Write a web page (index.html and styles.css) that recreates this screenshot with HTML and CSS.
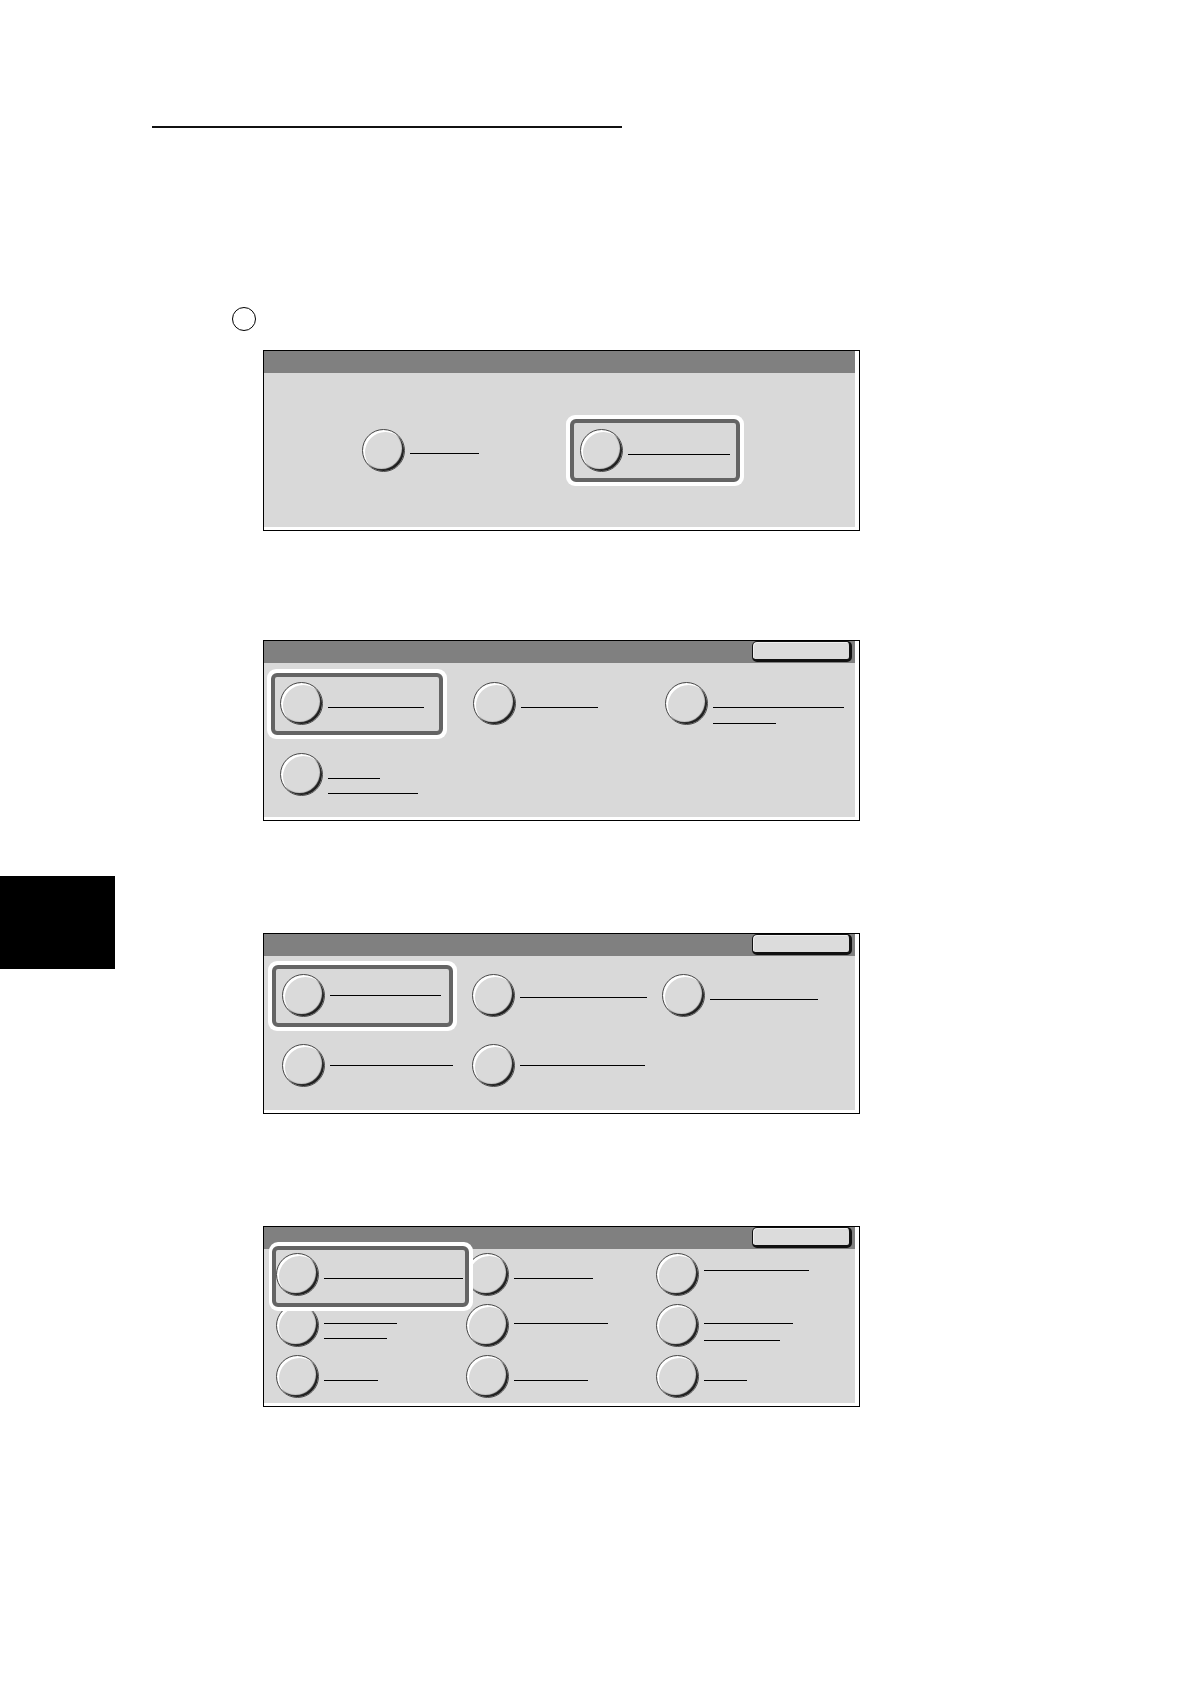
FILE: index.html
```html
<!DOCTYPE html>
<html lang="en">
<head>
<meta charset="utf-8">
<title>Screens</title>
<link rel="stylesheet" href="styles.css">
</head>
<body>
<div class="page">
  <div class="rule"></div>
  <div class="marker"></div>

  <div class="panel p1">
    <div class="title"></div>
    <div class="body">
      <div class="opt o1">
        <div class="circ"></div>
        <div class="lbl t24"><div class="ln w69"></div></div>
      </div>
      <div class="sel s1">
        <div class="sel-in">
          <div class="opt">
            <div class="circ"></div>
            <div class="lbl t25"><div class="ln w102"></div></div>
          </div>
        </div>
      </div>
    </div>
  </div>

  <div class="panel p2">
    <div class="title"><div class="tbtn"></div></div>
    <div class="body grid">
      <div class="sel s2">
        <div class="sel-in">
          <div class="opt">
            <div class="circ"></div>
            <div class="lbl t25"><div class="ln w96"></div></div>
          </div>
        </div>
      </div>
      <div class="opt">
        <div class="circ"></div>
        <div class="lbl t25"><div class="ln w77"></div></div>
      </div>
      <div class="opt">
        <div class="circ"></div>
        <div class="lbl t25"><div class="ln w131"></div><div class="ln w63 g15"></div></div>
      </div>
      <div class="opt">
        <div class="circ"></div>
        <div class="lbl t25"><div class="ln w52"></div><div class="ln w90 g14"></div></div>
      </div>
    </div>
  </div>

  <div class="panel p3">
    <div class="title"><div class="tbtn"></div></div>
    <div class="body grid">
      <div class="sel s3">
        <div class="sel-in">
          <div class="opt">
            <div class="circ"></div>
            <div class="lbl t21"><div class="ln w111"></div></div>
          </div>
        </div>
      </div>
      <div class="opt">
        <div class="circ"></div>
        <div class="lbl t23"><div class="ln w127"></div></div>
      </div>
      <div class="opt">
        <div class="circ"></div>
        <div class="lbl t25"><div class="ln w108"></div></div>
      </div>
      <div class="opt">
        <div class="circ"></div>
        <div class="lbl t21"><div class="ln w123"></div></div>
      </div>
      <div class="opt">
        <div class="circ"></div>
        <div class="lbl t21"><div class="ln w125"></div></div>
      </div>
    </div>
  </div>

  <div class="panel p4">
    <div class="title"><div class="tbtn"></div></div>
    <div class="body grid">
      <div class="sel s4">
        <div class="sel-in">
          <div class="opt">
            <div class="circ"></div>
            <div class="lbl t25"><div class="ln w139"></div></div>
          </div>
        </div>
      </div>
      <div class="opt">
        <div class="circ"></div>
        <div class="lbl t25"><div class="ln w79"></div></div>
      </div>
      <div class="opt">
        <div class="circ"></div>
        <div class="lbl t17"><div class="ln w105"></div></div>
      </div>
      <div class="opt">
        <div class="circ"></div>
        <div class="lbl t19"><div class="ln w73"></div><div class="ln w63 g14"></div></div>
      </div>
      <div class="opt">
        <div class="circ"></div>
        <div class="lbl t19"><div class="ln w94"></div></div>
      </div>
      <div class="opt">
        <div class="circ"></div>
        <div class="lbl t19"><div class="ln w89"></div><div class="ln w76 g16"></div></div>
      </div>
      <div class="opt">
        <div class="circ"></div>
        <div class="lbl t25"><div class="ln w54"></div></div>
      </div>
      <div class="opt">
        <div class="circ"></div>
        <div class="lbl t25"><div class="ln w74"></div></div>
      </div>
      <div class="opt">
        <div class="circ"></div>
        <div class="lbl t25"><div class="ln w43"></div></div>
      </div>
    </div>
  </div>
</div>
<div class="tab"></div>
</body>
</html>
```

FILE: styles.css
```css
* { box-sizing: border-box; }
html, body { margin: 0; padding: 0; background: #fff; }
body {
  font-family: "Liberation Sans", Arial, sans-serif;
  position: relative;
  min-height: 1684px;
}
.page { padding-top: 126px; }

.rule {
  margin-left: 152px;
  width: 470px;
  height: 2px;
  background: #111;
}
.marker {
  margin: 179px 0 0 232px;
  width: 24px;
  height: 24px;
  border: 1px solid #000;
  border-radius: 50%;
}

.panel {
  width: 597px;
  height: 181px;
  margin-left: 263px;
  border: 1px solid #000;
  background: #fff;
  padding: 0 4px 3px 0;
  display: flex;
  flex-direction: column;
}
.p1 { margin-top: 19px; }
.p2 { margin-top: 109px; }
.p3 { margin-top: 112px; }
.p4 { margin-top: 112px; }

.title {
  height: 22px;
  flex: none;
  background: #808080;
  display: flex;
  justify-content: flex-end;
  align-items: flex-start;
  padding: 0 3px 0 0;
}
.tbtn {
  width: 100px;
  height: 21px;
  background: #dcdcdc;
  border: 1px solid #111;
  border-right-width: 3px;
  border-bottom-width: 3px;
  border-radius: 5px;
  box-shadow: inset 1px 1px 0 #efefef;
}

.body {
  flex: 1;
  background: #d9d9d9;
}

.opt {
  display: flex;
  align-items: flex-start;
}
.circ {
  flex: none;
  width: 43px;
  height: 43px;
  border-radius: 50%;
  background: #dadada;
  border: 1px solid #4a4a4a;
  box-shadow: inset 2px 2px 0 #fff, inset -2px -2px 1px #1e1e1e;
}
.lbl {
  margin-left: 5px;
  display: flex;
  flex-direction: column;
}
.ln { height: 0; border-top: 1px solid #000; }

.t17 { padding-top: 17px; }
.t19 { padding-top: 19px; }
.t21 { padding-top: 21px; }
.t23 { padding-top: 23px; }
.t24 { padding-top: 24px; }
.t25 { padding-top: 25px; }
.g14 { margin-top: 14px; }
.g15 { margin-top: 15px; }
.g16 { margin-top: 16px; }

.w43 { width: 43px; } .w52 { width: 52px; } .w54 { width: 54px; }
.w63 { width: 63px; } .w69 { width: 69px; } .w73 { width: 73px; }
.w74 { width: 74px; } .w76 { width: 76px; } .w77 { width: 77px; }
.w79 { width: 79px; } .w89 { width: 89px; } .w90 { width: 90px; }
.w94 { width: 94px; } .w96 { width: 96px; } .w102 { width: 102px; }
.w105 { width: 105px; } .w108 { width: 108px; } .w111 { width: 111px; }
.w123 { width: 123px; } .w125 { width: 125px; } .w127 { width: 127px; }
.w131 { width: 131px; } .w139 { width: 139px; }

/* selected option highlight */
.sel {
  position: relative;
  z-index: 1;
  background: #fff;
  border-radius: 9px;
  padding: 4px;
}
.sel-in {
  height: 100%;
  border: 4px solid #646464;
  border-radius: 6px;
  background: #d9d9d9;
}

/* panel 1 */
.p1 .body {
  display: flex;
  align-items: flex-start;
  padding: 42px 0 0 98px;
}
.o1 { margin-top: 14px; }
.s1 { margin-left: 87px; width: 178px; height: 71px; }
.s1 .sel-in { padding: 6px 0 0 6px; }

/* grids */
.grid { display: grid; align-items: start; }
.p2 .grid {
  grid-template-columns: 193px 192px 1fr;
  grid-template-rows: 43px 43px;
  row-gap: 28px;
  padding: 19px 0 0 16px;
}
.s2 { width: 180px; height: 70px; margin: -13px 0 0 -13px; }
.s2 .sel-in { padding: 5px 0 0 5px; }

.p3 .grid {
  grid-template-columns: 190px 190px 1fr;
  grid-template-rows: 43px 43px;
  row-gap: 27px;
  padding: 18px 0 0 18px;
}
.s3 { width: 189px; height: 70px; margin: -13px 0 0 -14px; }
.s3 .sel-in { padding: 5px 0 0 6px; }

.p4 .grid {
  grid-template-columns: 190px 190px 1fr;
  grid-template-rows: 43px 43px 43px;
  row-gap: 8px;
  padding: 4px 0 0 12px;
}
.s4 { width: 204px; height: 69px; margin: -11px 0 0 -7px; padding: 4px 4px 4px 3px; }
.s4 .sel-in { padding: 3px 0 0 0; }

.tab {
  position: absolute;
  left: 0;
  top: 876px;
  width: 115px;
  height: 93px;
  background: #000;
}
```
